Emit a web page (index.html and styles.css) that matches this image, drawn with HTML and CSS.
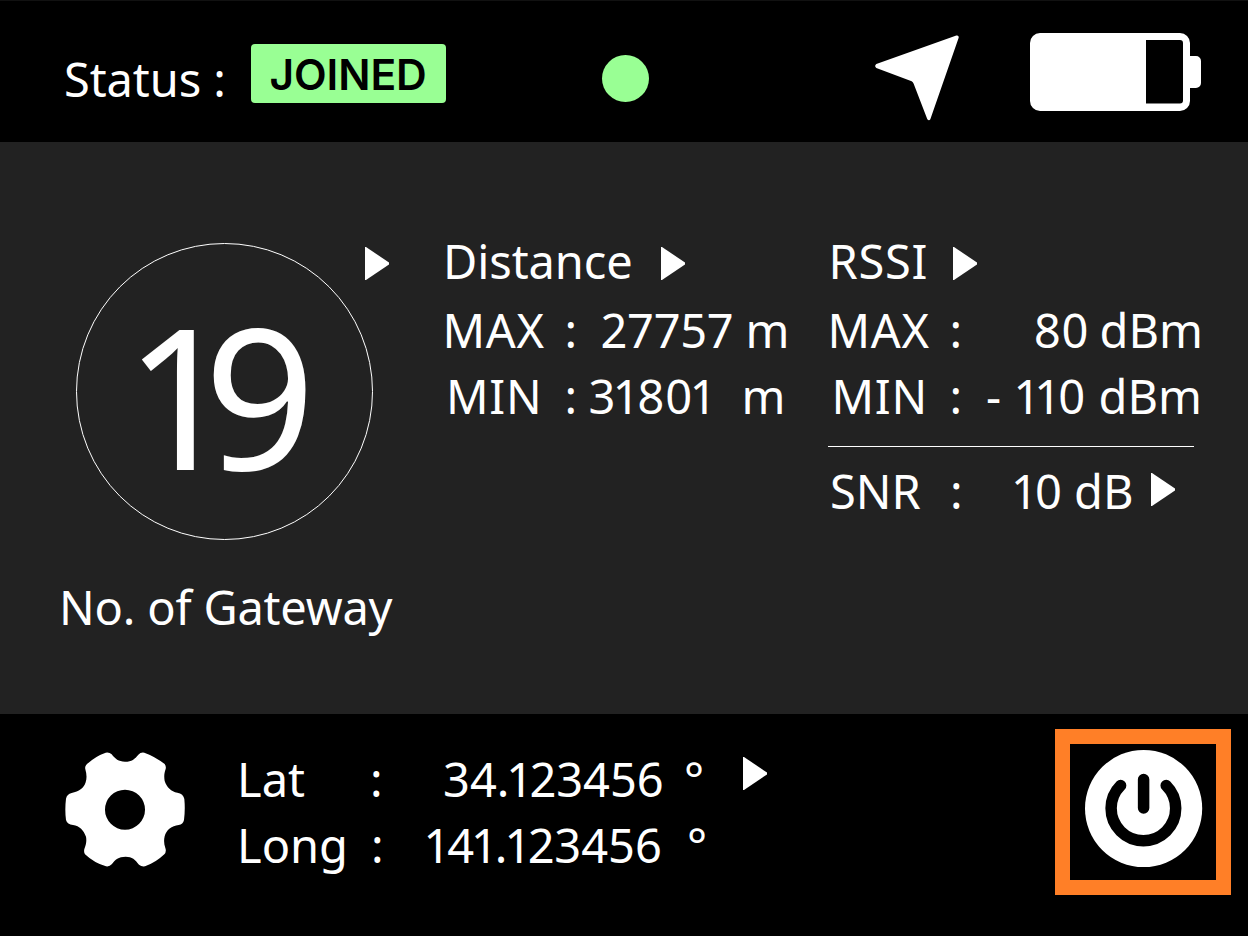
FILE: index.html
```
<!DOCTYPE html>
<html lang="en">
<head>
<meta charset="utf-8">
<title>Gateway status</title>
<link rel="stylesheet" href="styles.css">
</head>
<body>
<header class="topbar">
  <span class="status">Status :</span>
  <span class="badge">JOINED</span>
  <span class="dot"></span>
  <svg class="locate" viewBox="45 104 252 258"><path d="M49 191 L289 105.500 Q297 104 296 112 L211 357 Q207 363 202 357 L161 250 Q159 245 155 243 L49 203 Q42 197 49 191 Z"/></svg>
  <svg class="battery" viewBox="0 0 171 78"><path fill-rule="evenodd" d="M10 0H150a10 10 0 0 1 10 10V23H166a5 5 0 0 1 5 5V50a5 5 0 0 1-5 5H160V68a10 10 0 0 1-10 10H10a10 10 0 0 1-10-10V10a10 10 0 0 1 10-10Z M116 7V70.500H150a3 3 0 0 0 3-3V10a3 3 0 0 0-3-3Z"/></svg>
</header>
<main class="panel">
  <section class="gateway">
    <div class="gauge">
      <div class="count">19</div>
      <svg class="tri" viewBox="0 0 24 33"><path d="M0 0H1L24 15.500V17.500L1 33H0Z"/></svg>
    </div>
    <div class="caption">No. of Gateway</div>
  </section>
  <section class="distance">
    <div class="title distance-title"><span>Distance</span><svg class="tri" viewBox="0 0 24 33"><path d="M0 0H1L24 15.500V17.500L1 33H0Z"/></svg></div>
    <div class="row distance-max"><span class="caps">MAX</span><span>:</span><span class="even">27757</span><span>m</span></div>
    <div class="row distance-min"><span class="caps">MIN</span><span>:</span><span class="loose">31801</span><span>m</span></div>
  </section>
  <section class="rssi">
    <div class="title rssi-title"><span class="caps">RSSI</span><svg class="tri" viewBox="0 0 24 33"><path d="M0 0H1L24 15.500V17.500L1 33H0Z"/></svg></div>
    <div class="row rssi-max"><span class="caps">MAX</span><span>:</span><span>80</span><span>dBm</span></div>
    <div class="row rssi-min"><span class="caps">MIN</span><span>:</span><span>-</span><span>110</span><span>dBm</span></div>
    <div class="rule"></div>
    <div class="row snr"><span>SNR</span><span>:</span><span>10</span><span>dB</span><svg class="tri" viewBox="0 0 24 33"><path d="M0 0H1L24 15.500V17.500L1 33H0Z"/></svg></div>
  </section>
</main>
<footer class="bottombar">
  <svg class="gear" viewBox="45 37 360 345"><path fill-rule="evenodd" d="M109 75 Q135 50 167 39 Q178 37 185 44 C196 58 205 66 225 66 C246 66 254 58 265 45 Q272 37 283 39 Q314 50 344 73 Q349 80 347 88 C342 102 342 112 344 124 C350 143 364 156 382 159 Q400 162 403 178 Q406 210 402 241 Q399 254 386 256 C365 259 349 270 344 290 C341 303 342 313 346 325 Q350 335 343 344 Q317 369 285 380 Q275 382 267 375 C255 359 247 351 227 351 C205 351 196 360 186 373 Q178 382 168 380 Q134 371 105 344 Q100 336 104 325 C109 312 110 303 108 291 C101 272 89 259 69 256 Q52 255 48 241 Q44 210 48 177 Q51 163 65 160 C87 156 101 146 107 128 C111 115 110 103 106 89 Q104 81 109 75Z M225 150a60 60 0 1 0 0 120a60 60 0 1 0 0-120Z"/></svg>
  <div class="coords">
    <div class="row lat"><span>Lat</span><span>:</span><span>34.123456</span><span>°</span><svg class="tri" viewBox="0 0 24 33"><path d="M0 0H1L24 15.500V17.500L1 33H0Z"/></svg></div>
    <div class="row long"><span>Long</span><span>:</span><span>141.123456</span><span>°</span></div>
  </div>
  <div class="power">
    <svg viewBox="0 0 146 136"><circle cx="73.600" cy="64.500" r="58.600"/><path class="mark" d="M50.600 41.500a32.300 32.300 0 1 0 45.600 0M73.600 35.500V64"/></svg>
  </div>
</footer>
</body>
</html>
```
FILE: styles.css
```
* { box-sizing: border-box; }
body {
  margin: 0;
  width: 1248px;
  height: 936px;
  display: grid;
  grid-template-rows: 142px 572px 222px;
  overflow: hidden;
  background: #000;
  color: #fff;
  font: 47px/68px "Noto Sans", sans-serif;
  font-variant-numeric: proportional-nums;
  white-space: nowrap;
}
svg { display: block; fill: #fff; flex: none; }

.topbar { display: flex; align-items: flex-start; border-top: 1px solid #111; }
.status { margin: 44px 0 0 64px; width: 187px; letter-spacing: -0.1px; }
.badge {
  width: 195px;
  height: 59px;
  margin-top: 43px;
  padding-left: 18.5px;
  border-radius: 4px;
  background: #99ff94;
  color: #000;
  font: 600 42.5px/62px Inter, sans-serif;
  letter-spacing: -0.1px;
}
.dot { width: 47px; height: 47px; margin: 54px 0 0 156px; border-radius: 50%; background: #99ff94; }
.locate { width: 84px; height: 86px; margin: 34px 0 0 226px; }
.battery { width: 171px; height: 78px; margin: 32px 0 0 71px; }

.panel {
  display: grid;
  grid-template-columns: 385px 385px 1fr;
  padding: 85px 0 0 58px;
  background: #222;
}
.gauge { display: flex; align-items: flex-start; margin: 16px 0 33px 18px; }
.gauge .tri { margin: 4px 0 0 -8px; }
.count {
  width: 297px;
  height: 297px;
  padding-left: 60px;
  border: 1px solid #fff;
  border-radius: 50%;
  font-size: 195px;
  line-height: 302px;
  letter-spacing: -19px;
}
.caption { padding-left: 1px; letter-spacing: -0.2px; }
.tri { width: 24px; height: 33px; margin-top: 20px; }
.caps { letter-spacing: 0.7px; }
.even { font-variant-numeric: tabular-nums; letter-spacing: -0.3px; }
.loose { letter-spacing: 0.4px; }

.title, .row { display: grid; height: 66px; }
.title { margin-bottom: 3px; }
.distance-title { grid-template-columns: 218px 24px; letter-spacing: -0.1px; }
.distance-max { grid-template-columns: 122px 36px 145px 40px; margin-left: -0.5px; }
.distance-min { grid-template-columns: 118.5px 24px 153px 40px; margin-left: 3px; }
.rssi-title { grid-template-columns: 124.500px 24px; margin-left: 0.5px; }
.rssi-max { grid-template-columns: 122px 84px 66px 100px; margin-left: -0.5px; }
.rssi-min { grid-template-columns: 118px 36.5px 30.5px 82px 100px; margin-left: 3.5px; }
.rule { width: 366px; height: 1px; margin: 18px 0 10px; background: #fff; }
.snr { grid-template-columns: 120px 64px 60px 77px 24px; margin-left: 2px; }
.snr .tri { margin-top: 16px; }

.bottombar { display: flex; align-items: flex-start; }
.gear { width: 120px; height: 115px; margin: 38px 0 0 65px; }
.coords { margin: 31px 0 0 52px; width: 818px; }
.lat { grid-template-columns: 133px 73px 241px 59px 24px; }
.lat .tri { margin-top: 12px; }
.long { grid-template-columns: 134px 55.5px 260.500px 40px; }
.power { width: 176px; height: 166px; margin-top: 15px; border: 15px solid #ff7f27; }
.power .mark { fill: none; stroke: #000; stroke-width: 11.5px; stroke-linecap: round; }
```
